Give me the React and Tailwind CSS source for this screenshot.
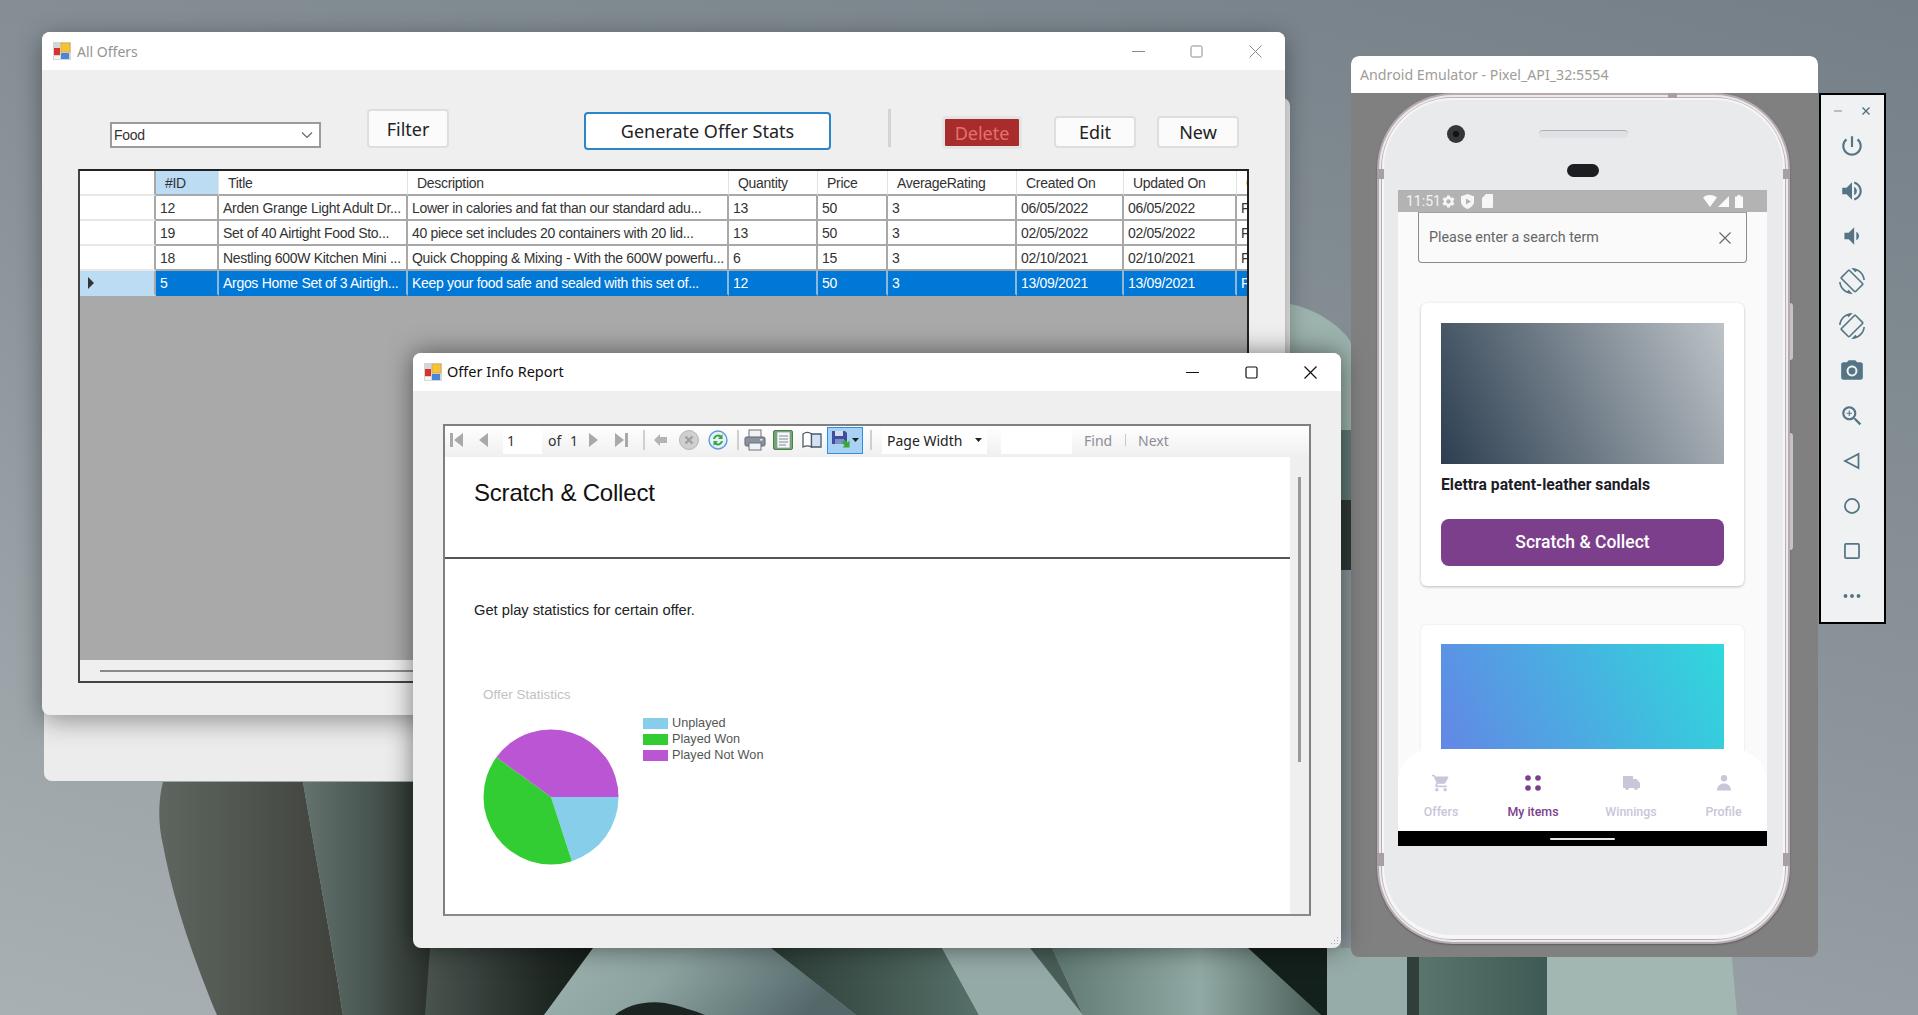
import React from "react";

const columns = [
    {w: "w-[63px]", label: "#ID", active: true},
    {w: "w-[189px]", label: "Title"},
    {w: "w-[321px]", label: "Description"},
    {w: "w-[89px]", label: "Quantity"},
    {w: "w-[70px]", label: "Price"},
    {w: "w-[129px]", label: "AverageRating"},
    {w: "w-[107px]", label: "Created On"},
    {w: "w-[113px]", label: "Updated On"},
    {w: "w-[40px]", label: "C"},
];

const rows = [
    ["12", "Arden Grange Light Adult Dr...", "Lower in calories and fat than our standard adu...", "13", "50", "3", "06/05/2022", "06/05/2022", "F"],
    ["19", "Set of 40 Airtight Food Sto...", "40 piece set includes 20 containers with 20 lid...", "13", "50", "3", "02/05/2022", "02/05/2022", "F"],
    ["18", "Nestling 600W Kitchen Mini ...", "Quick Chopping & Mixing - With the 600W powerfu...", "6", "15", "3", "02/10/2021", "02/10/2021", "F"],
    ["5", "Argos Home Set of 3 Airtigh...", "Keep your food safe and sealed with this set of...", "12", "50", "3", "13/09/2021", "13/09/2021", "F"],
];

function AppIcon() {
    return (
        <svg width="18" height="18" viewBox="0 0 18 18" className="shrink-0">
            <rect width="18" height="18" fill="#d6d6d6"/>
            <rect x="8" y="1" width="9" height="9" fill="#f6c338" stroke="#c79a20" strokeWidth="0.5"/>
            <rect x="1" y="6" width="6" height="7" fill="#d8322a"/>
            <rect x="8" y="11" width="8" height="6" fill="#4a86d8"/>
            <rect x="1" y="14" width="6" height="3" fill="#f4f4f4"/>
        </svg>
    );
}

function WindowControls({color, gapA, gapB, strokeWidth = 1}) {
    return (
        <div className="flex items-center">
            <svg width="13" height="13" viewBox="0 0 13 13"><path d="M0 6.5H13" stroke={color} strokeWidth={strokeWidth}/></svg>
            <svg width="13" height="13" viewBox="0 0 13 13" className={gapA}><rect x="1" y="1" width="11" height="11" rx="1.5" fill="none" stroke={color} strokeWidth={strokeWidth}/></svg>
            <svg width="13" height="13" viewBox="0 0 13 13" className={gapB}><path d="M0.5 0.5L12.5 12.5M12.5 0.5L0.5 12.5" stroke={color} strokeWidth={strokeWidth}/></svg>
        </div>
    );
}

function WinButton({className, children}) {
    return (
        <div className={`flex items-center justify-center rounded border-2 border-[#dedede] bg-[#fbfbfb] font-['Noto_Sans',sans-serif] text-[18px] leading-none text-[#222] ${className}`}>
            {children}
        </div>
    );
}

function OffersGrid() {
    return (
        <div className="ml-[36px] flex h-[514px] w-[1171px] flex-col overflow-hidden border-2 border-b-[#444] border-l-[#444] border-r-[#222] border-t-[#222] bg-[#a9a9a9] font-['Liberation_Sans',sans-serif] text-[14px] tracking-[-0.3px] text-[#333]">
            <div className="flex h-[25px] shrink-0 bg-white">
                <div className="w-[76px] shrink-0 border-b-2 border-r-2 border-b-[#e8e8e8] border-r-[#a8a8a8]"/>
                {columns.map(col => (
                    <div key={col.label}
                         className={`flex shrink-0 items-center border-b-2 border-r border-b-[#a8a8a8] border-r-[#e2e2e2] pl-[9px] pt-[1px] ${col.w} ${col.active ? "bg-[#bcdcf4]" : "bg-white"}`}>
                        {col.label}
                    </div>
                ))}
            </div>
            {rows.map((row, i) => {
                const selected = i === rows.length - 1;
                return (
                    <div key={row[0]} className={`flex h-[25px] shrink-0 ${selected ? "bg-[#0078d7] text-white" : "bg-white"}`}>
                        <div className={`flex w-[76px] shrink-0 items-center border-b-2 border-r-2 border-r-[#a8a8a8] pl-[7px] ${selected ? "border-b-[#bcdcf4] bg-[#bcdcf4]" : "border-b-[#e8e8e8] bg-white"}`}>
                            {selected && (
                                <svg width="8" height="12" viewBox="0 0 8 12"><path d="M1 0L7 6L1 12Z" fill="#333"/></svg>
                            )}
                        </div>
                        {row.map((cell, j) => (
                            <div key={j}
                                 className={`flex shrink-0 items-center overflow-hidden whitespace-nowrap border-b-2 border-r-2 pl-[4px] pt-[1px] ${columns[j].w} ${selected ? "border-b-[#0078d7] border-r-[#8fb8d8]" : "border-b-[#a8a8a8] border-r-[#a8a8a8]"}`}>
                                {cell}
                            </div>
                        ))}
                    </div>
                );
            })}
            <div className="flex-1"/>
            <div className="flex h-[21px] shrink-0 items-center bg-[#efefef] pl-[20px]">
                <div className="h-[2px] w-[600px] bg-[#8a8a8a]"/>
            </div>
        </div>
    );
}

function AllOffersWindow() {
    return (
        <div className="absolute left-[42px] top-[32px] flex h-[683px] w-[1243px] flex-col overflow-hidden rounded-lg bg-[#efefef] shadow-[0_6px_26px_rgba(0,0,0,0.38)]">
            <div className="flex h-[38px] shrink-0 items-center bg-white pl-[11px] pr-[23px]">
                <AppIcon/>
                <span className="ml-[6px] font-['Noto_Sans',sans-serif] text-[14px] text-[#949494]">All Offers</span>
                <div className="ml-auto">
                    <WindowControls color="#8a8a8a" gapA="ml-[45px]" gapB="ml-[46px]"/>
                </div>
            </div>
            <div className="flex h-[99px] shrink-0 items-start pl-[68px]">
                <div className="mt-[52px] flex h-[26px] w-[211px] items-center justify-between border-2 border-[#9b9b9b] bg-white pl-[2px] pr-[6px] font-['Liberation_Sans',sans-serif] text-[14px] tracking-[-0.3px] text-[#333]">
                    Food
                    <svg width="12" height="8" viewBox="0 0 12 8"><path d="M1 1.5L6 6.5L11 1.5" fill="none" stroke="#666" strokeWidth="1.2"/></svg>
                </div>
                <WinButton className="ml-[46px] mt-[39px] h-[39px] w-[82px]">Filter</WinButton>
                <WinButton className="ml-[135px] mt-[42px] h-[38px] w-[247px] !border-[#2a85c9] bg-white">Generate Offer Stats</WinButton>
                <div className="ml-[57px] mt-[39px] h-[38px] w-[3px] bg-[#d4d4d4]"/>
                <div className="ml-[51px] mt-[46px] flex h-[33px] w-[80px] items-center justify-center rounded border-[3px] border-[#e4e4e4] bg-[#a82c2c] font-['Noto_Sans',sans-serif] text-[18px] leading-none text-[#e4726c]">
                    Delete
                </div>
                <WinButton className="ml-[32px] mt-[46px] h-[32px] w-[82px]">Edit</WinButton>
                <WinButton className="ml-[21px] mt-[46px] h-[32px] w-[82px]">New</WinButton>
            </div>
            <OffersGrid/>
        </div>
    );
}

function Tri({dir, bar}) {
    return (
        <svg width="14" height="16" viewBox="0 0 14 16" className="shrink-0">
            {dir === "left"
                ? <path d={bar ? "M13 1V15L4 8Z" : "M11 1V15L2 8Z"} fill="#a9a9a9"/>
                : <path d={bar ? "M1 1V15L10 8Z" : "M3 1V15L12 8Z"} fill="#a9a9a9"/>}
            {bar && <rect x={dir === "left" ? 0 : 11} y="1" width="3" height="14" fill="#a9a9a9"/>}
        </svg>
    );
}

function ToolbarSep({className}) {
    return <div className={`h-[20px] w-[2px] shrink-0 bg-[#cfcfcf] ${className}`}/>;
}

function ReportToolbar() {
    return (
        <div className="flex h-[31px] shrink-0 items-center bg-linear-to-b from-white to-[#efefef] pb-[3px] pl-[5px] font-['Noto_Sans',sans-serif] text-[14px] text-[#333]">
            <Tri dir="left" bar/>
            <div className="ml-[13px]"><Tri dir="left"/></div>
            <div className="ml-[12px] flex h-[28px] w-[39px] shrink-0 items-center bg-white pl-[4px]">1</div>
            <span className="ml-[6px] w-[15px] shrink-0">of</span>
            <span className="ml-[7px] w-[8px] shrink-0">1</span>
            <div className="ml-[8px]"><Tri dir="right"/></div>
            <div className="ml-[14px]"><Tri dir="right" bar/></div>
            <ToolbarSep className="ml-[15px]"/>
            <svg width="14" height="12" viewBox="0 0 14 12" className="ml-[9px] shrink-0"><path d="M0 6L6 0V3H13V9H6V12Z" fill="#b4b4b4"/></svg>
            <svg width="20" height="20" viewBox="0 0 20 20" className="ml-[11px] shrink-0">
                <circle cx="10" cy="10" r="9.5" fill="#cfcfcf" stroke="#b5b5b5"/>
                <path d="M6.5 6.5L13.5 13.5M13.5 6.5L6.5 13.5" stroke="#9f9f9f" strokeWidth="2.4"/>
            </svg>
            <svg width="20" height="20" viewBox="0 0 20 20" className="ml-[9px] shrink-0">
                <circle cx="10" cy="10" r="9" fill="#e6f0fb" stroke="#5d9bd8" strokeWidth="1.4"/>
                <path d="M5 9A5 5 0 0 1 13 5.5L14.5 4V9H10L11.7 7.2A3 3 0 0 0 7 9Z" fill="#3aa63a"/>
                <path d="M15 11A5 5 0 0 1 7 14.5L5.5 16V11H10L8.3 12.8A3 3 0 0 0 13 11Z" fill="#3aa63a"/>
            </svg>
            <ToolbarSep className="ml-[9px]"/>
            <svg width="22" height="22" viewBox="0 0 22 22" className="ml-[5px] shrink-0">
                <rect x="5" y="1" width="12" height="8" fill="#f2f2f2" stroke="#6c7480"/>
                <rect x="1" y="8" width="20" height="9" rx="1.5" fill="#8a929c" stroke="#5e6670"/>
                <rect x="5" y="14" width="12" height="7" fill="#eef3f8" stroke="#6c7480"/>
                <rect x="16" y="10" width="2.5" height="1.5" fill="#e4e8ec"/>
            </svg>
            <svg width="20" height="20" viewBox="0 0 20 20" className="ml-[7px] shrink-0">
                <rect x="0.5" y="0.5" width="19" height="19" rx="1.5" fill="#6ea86e" stroke="#4c7f4c"/>
                <rect x="4" y="2" width="13" height="16" fill="#f4f6f8" stroke="#8d98a4" strokeWidth="0.7"/>
                <path d="M6 6H15M6 9H15M6 12H15M6 15H13" stroke="#7f8a96"/>
            </svg>
            <svg width="20" height="18" viewBox="0 0 20 18" className="ml-[9px] shrink-0">
                <path d="M1 3C4 1 7 1 9.5 3V16C7 14.5 4 14.5 1 16Z" fill="#fff" stroke="#4f5966" strokeWidth="1.3"/>
                <path d="M9.5 3H19V16H9.5Z" fill="#d3e2f5" stroke="#4f5966" strokeWidth="1.3"/>
            </svg>
            <div className="ml-[5px] flex h-[27px] w-[36px] shrink-0 items-center justify-center gap-[1px] border border-[#2d8fe0] bg-[#a9d1f3]">
                <svg width="20" height="20" viewBox="0 0 20 20">
                    <path d="M1 1H14L16 3V14H1Z" fill="#3b4f9e"/>
                    <rect x="4" y="1" width="8" height="5" fill="#d6dcf0"/>
                    <rect x="4" y="9" width="9" height="5" fill="#7f8fc8"/>
                    <path d="M11 12H15V9L20 14L15 19V16H11Z" fill="#38a838" transform="rotate(45 15 14)"/>
                </svg>
                <svg width="7" height="4" viewBox="0 0 7 4"><path d="M0 0H7L3.5 4Z" fill="#222"/></svg>
            </div>
            <ToolbarSep className="ml-[7px]"/>
            <div className="ml-[10px] flex h-[28px] w-[105px] shrink-0 items-center justify-between bg-white pl-[5px] pr-[5px] text-[#222]">
                Page Width
                <svg width="7" height="4" viewBox="0 0 7 4"><path d="M0 0H7L3.5 4Z" fill="#222"/></svg>
            </div>
            <div className="ml-[14px] h-[28px] w-[71px] shrink-0 bg-white"/>
            <span className="ml-[12px] w-[28px] shrink-0 text-[#8d8d9a]">Find</span>
            <div className="ml-[13px] h-[12px] w-[1px] shrink-0 bg-[#c8c8c8]"/>
            <span className="ml-[12px] text-[#8d8d9a]">Next</span>
        </div>
    );
}

function OfferPie() {
    return (
        <svg width="136" height="136" viewBox="0 0 136 136" className="mt-[12px] shrink-0">
            <path d="M68 68L135.5 68A67.5 67.5 0 0 1 88.86 132.2Z" fill="#87ceeb"/>
            <path d="M68 68L88.86 132.2A67.5 67.5 0 0 1 13.4 28.3Z" fill="#32cd32"/>
            <path d="M68 68L13.4 28.3A67.5 67.5 0 0 1 135.5 68Z" fill="#ba55d3"/>
        </svg>
    );
}

const legend = [
    {name: "Unplayed", color: "bg-[#87ceeb]"},
    {name: "Played Won", color: "bg-[#32cd32]"},
    {name: "Played Not Won", color: "bg-[#ba55d3]"},
];

function ReportWindow() {
    return (
        <div className="absolute left-[413px] top-[353px] flex h-[595px] w-[928px] flex-col overflow-hidden rounded-lg bg-[#efefef] shadow-[0_0_26px_rgba(0,0,0,0.5)]">
            <div className="flex h-[38px] shrink-0 items-center bg-white pl-[11px] pr-[24px]">
                <AppIcon/>
                <span className="ml-[5px] font-['Noto_Sans',sans-serif] text-[14.5px] text-[#111]">Offer Info Report</span>
                <div className="ml-auto">
                    <WindowControls color="#111" gapA="ml-[46px]" gapB="ml-[46px]" strokeWidth={1.2}/>
                </div>
            </div>
            <div className="ml-[30px] mt-[33px] flex h-[492px] w-[868px] flex-col border-2 border-[#808080] border-b-[#8a8a8a]">
                <ReportToolbar/>
                <div className="flex min-h-0 flex-1">
                    <div className="w-[845px] bg-white font-['Liberation_Sans',sans-serif]">
                        <div className="h-[102px] border-b-2 border-[#555] pl-[29px] pt-[22px] text-[24px] leading-[28px] tracking-[-0.2px] text-[#111]">
                            Scratch &amp; Collect
                        </div>
                        <p className="ml-[29px] mt-[42px] text-[14.7px] leading-[18px] text-[#222]">Get play statistics for certain offer.</p>
                        <p className="ml-[38px] mt-[68px] text-[13.5px] leading-[16px] text-[#c2c2c2]">Offer Statistics</p>
                        <div className="ml-[38px] mt-[14px] flex items-start">
                            <OfferPie/>
                            <div className="-mt-[1px] ml-[24px] text-[12.7px] leading-[15.75px] text-[#555]">
                                {legend.map(item => (
                                    <div key={item.name} className="flex items-center">
                                        <div className={`h-[11px] w-[25px] ${item.color}`}/>
                                        <span className="ml-[4px]">{item.name}</span>
                                    </div>
                                ))}
                            </div>
                        </div>
                    </div>
                    <div className="flex-1 bg-[#efefef] pl-[8px] pt-[20px]">
                        <div className="h-[285px] w-[3px] bg-[#9a9a9a]"/>
                    </div>
                </div>
            </div>
            <svg width="10" height="10" viewBox="0 0 10 10" className="absolute bottom-[2px] right-[2px]">
                <path d="M8 1h1v1H8zM8 4h1v1H8zM5 4h1v1H5zM8 7h1v1H8zM5 7h1v1H5zM2 7h1v1H2z" fill="#a8a8a8"/>
            </svg>
        </div>
    );
}

const rotatePath = "M16.48 2.52c3.27 1.55 5.61 4.72 5.97 8.48h1.5C23.44 4.84 18.29 0 12 0l-.66.03 3.81 3.81 1.33-1.32zm-6.25-.77c-.59-.59-1.54-.59-2.12 0L1.75 8.11c-.59.59-.59 1.54 0 2.12l12.02 12.02c.59.59 1.54.59 2.12 0l6.36-6.36c.59-.59.59-1.54 0-2.12L10.23 1.75zm4.6 19.44L2.81 9.17l6.36-6.36 12.02 12.02-6.36 6.36zm-7.31.29C4.25 19.94 1.91 16.76 1.55 13H.05C.56 19.16 5.71 24 12 24l.66-.03-3.81-3.81-1.33 1.32z";

const ink = "#557585";

const emuIcons = [
    <path key="power" d="M13 3h-2v10h2V3zm4.83 2.17l-1.42 1.42C17.99 7.86 19 9.81 19 12c0 3.87-3.13 7-7 7s-7-3.13-7-7c0-2.19 1.01-4.14 2.58-5.42L6.17 5.17C4.23 6.82 3 9.26 3 12c0 4.97 4.03 9 9 9s9-4.03 9-9c0-2.74-1.23-5.18-3.17-6.83z" fill={ink}/>,
    <path key="up" d="M3 9v6h4l5 5V4L7 9H3zm13.5 3c0-1.77-1.02-3.29-2.5-4.03v8.05c1.48-.73 2.5-2.25 2.5-4.02zM14 3.23v2.06c2.89.86 5 3.54 5 6.71s-2.11 5.85-5 6.71v2.06c4.01-.91 7-4.49 7-8.77s-2.99-7.86-7-8.77z" fill={ink}/>,
    <path key="down" d="M18.5 12c0-1.77-1.02-3.29-2.5-4.03v8.05c1.48-.73 2.5-2.25 2.5-4.02zM5 9v6h4l5 5V4L9 9H5z" fill={ink}/>,
    <path key="rot" d={rotatePath} fill={ink}/>,
    <path key="rotl" d={rotatePath} fill={ink} transform="matrix(-1 0 0 1 24 0)"/>,
    <g key="cam" fill={ink}>
        <path d="M9 2L7.17 4H4c-1.1 0-2 .9-2 2v12c0 1.1.9 2 2 2h16c1.1 0 2-.9 2-2V6c0-1.1-.9-2-2-2h-3.17L15 2H9zm3 15c-2.76 0-5-2.24-5-5s2.24-5 5-5 5 2.24 5 5-2.24 5-5 5z"/>
        <circle cx="12" cy="12" r="3.2"/>
    </g>,
    <path key="zoom" d="M15.5 14h-.79l-.28-.27C15.41 12.59 16 11.11 16 9.5 16 5.91 13.09 3 9.5 3S3 5.91 3 9.5 5.91 16 9.5 16c1.61 0 3.09-.59 4.23-1.57l.27.28v.79l5 4.99L20.49 19l-4.99-5zm-6 0C7.01 14 5 11.99 5 9.5S7.01 5 9.5 5 14 7.01 14 9.5 11.99 14 9.5 14zM12 10h-2v2H9v-2H7V9h2V7h1v2h2v1z" fill={ink}/>,
    <path key="back" d="M18 5.5V18.5L5.5 12Z" fill="none" stroke={ink} strokeWidth="1.6"/>,
    <circle key="home" cx="12" cy="12" r="6.5" fill="none" stroke={ink} strokeWidth="1.6"/>,
    <rect key="square" x="5.5" y="5.5" width="13" height="13" rx="1" fill="none" stroke={ink} strokeWidth="1.6"/>,
    <g key="dots" fill={ink}><circle cx="6" cy="12" r="1.8"/><circle cx="12" cy="12" r="1.8"/><circle cx="18" cy="12" r="1.8"/></g>,
];

function EmulatorToolbar() {
    return (
        <div className="absolute left-[1819px] top-[93px] flex h-[531px] w-[67px] flex-col border-2 border-black bg-[#f0f1f2] pr-[2px]">
            <div className="flex h-[28px] shrink-0 items-center justify-center gap-[20px] pt-[4px]">
                <svg width="8" height="8" viewBox="0 0 8 8"><path d="M0 4H8" stroke="#8aa0ac" strokeWidth="1.2"/></svg>
                <svg width="8" height="8" viewBox="0 0 8 8"><path d="M0.5 0.5L7.5 7.5M7.5 0.5L0.5 7.5" stroke="#4e7080" strokeWidth="1.4"/></svg>
            </div>
            {emuIcons.map((icon, i) => (
                <div key={i} className="flex h-[45.1px] shrink-0 items-center justify-center">
                    <svg width="26" height="26" viewBox="0 0 24 24">{icon}</svg>
                </div>
            ))}
        </div>
    );
}

function StatusBar() {
    return (
        <div className="flex h-[22px] shrink-0 items-center bg-[#b3b3b3] pl-[8px] pr-[24px] font-['Roboto',sans-serif] text-[14px] text-[#f4f4f4]">
            <span className="w-[35px] shrink-0">11:51</span>
            <svg width="15" height="15" viewBox="0 0 24 24" className="shrink-0">
                <path d="M19.14 12.94c.04-.3.06-.61.06-.94 0-.32-.02-.64-.07-.94l2.03-1.58c.18-.14.23-.41.12-.61l-1.92-3.32c-.12-.22-.37-.29-.59-.22l-2.39.96c-.5-.38-1.03-.7-1.62-.94l-.36-2.54c-.04-.24-.24-.41-.48-.41h-3.84c-.24 0-.43.17-.47.41l-.36 2.54c-.59.24-1.13.57-1.62.94l-2.39-.96c-.22-.08-.47 0-.59.22L2.74 8.87c-.12.21-.08.47.12.61l2.03 1.58c-.05.3-.09.63-.09.94s.02.64.07.94l-2.03 1.58c-.18.14-.23.41-.12.61l1.92 3.32c.12.22.37.29.59.22l2.39-.96c.5.38 1.03.7 1.62.94l.36 2.54c.05.24.24.41.48.41h3.84c.24 0 .44-.17.47-.41l.36-2.54c.59-.24 1.13-.56 1.62-.94l2.39.96c.22.08.47 0 .59-.22l1.92-3.32c.12-.22.07-.47-.12-.61l-2.01-1.58zM12 15.6c-1.98 0-3.6-1.62-3.6-3.6s1.62-3.6 3.6-3.6 3.6 1.62 3.6 3.6-1.62 3.6-3.6 3.6z" fill="#f6f6f6"/>
            </svg>
            <svg width="13" height="15" viewBox="0 0 13 15" className="ml-[5px] shrink-0">
                <path d="M6.5 0L13 2.3V7.5C13 11 10 13.7 6.5 15 3 13.7 0 11 0 7.5V2.3Z" fill="#f6f6f6"/>
                <path d="M5 4.5V10.5L10 7.5Z" fill="#b3b3b3"/>
            </svg>
            <svg width="11" height="14" viewBox="0 0 11 14" className="ml-[8px] shrink-0">
                <path d="M4 0H10A1 1 0 0 1 11 1V13A1 1 0 0 1 10 14H1A1 1 0 0 1 0 13V4Z" fill="#f6f6f6"/>
            </svg>
            <div className="ml-auto flex items-center">
                <svg width="14" height="12" viewBox="0 0 14 12"><path d="M0 2.5C4-.8 10-.8 14 2.5L7 12Z" fill="#fafafa"/></svg>
                <svg width="11" height="11" viewBox="0 0 11 11" className="ml-[1px]"><path d="M11 0V11H0Z" fill="#fafafa"/></svg>
                <svg width="8" height="13" viewBox="0 0 8 13" className="ml-[6px]"><path d="M2.5 0H5.5V1.5H8V13H0V1.5H2.5Z" fill="#fafafa"/></svg>
            </div>
        </div>
    );
}

function NavItem({label, width, active, children}) {
    return (
        <div className={`flex shrink-0 flex-col items-center ${width}`}>
            <div className="flex h-[20px] items-center justify-center">{children}</div>
            <span className={`mt-[11px] text-[12.4px] font-medium leading-[16px] ${active ? "text-[#7b3f8c]" : "text-[#c9c6d9]"}`}>{label}</span>
        </div>
    );
}

function BottomNav() {
    const muted = "#c9c6d9";
    return (
        <div className="absolute bottom-[15px] left-0 flex h-[82px] w-full rounded-t-[34px] bg-white pt-[24px] font-['Roboto',sans-serif]">
            <NavItem label="Offers" width="w-[86px]">
                <svg width="20" height="20" viewBox="0 0 24 24"><path d="M7 18c-1.1 0-1.99.9-1.99 2S5.9 22 7 22s2-.9 2-2-.9-2-2-2zM1 2v2h2l3.6 7.59-1.35 2.45c-.16.28-.25.61-.25.96 0 1.1.9 2 2 2h12v-2H7.42c-.14 0-.25-.11-.25-.25l.03-.12.9-1.63h7.45c.75 0 1.41-.41 1.75-1.03l3.58-6.47c.08-.13.12-.29.12-.45 0-.55-.45-1-1-1H5.21l-.94-2H1zM17 18c-1.1 0-1.99.9-1.99 2s.89 2 1.99 2 2-.9 2-2-.9-2-2-2z" fill={muted}/></svg>
            </NavItem>
            <NavItem label="My items" width="w-[98px]" active>
                <svg width="16" height="16" viewBox="0 0 16 16" fill="#7b3f8c">
                    <circle cx="3" cy="3" r="2.8"/><circle cx="13" cy="3" r="2.8"/><circle cx="3" cy="13" r="2.8"/><circle cx="13" cy="13" r="2.8"/>
                </svg>
            </NavItem>
            <NavItem label="Winnings" width="w-[98px]">
                <svg width="18" height="14" viewBox="0 0 18 14"><path d="M1 0H11V3H14.5L18 7V12H16A2 2 0 0 1 12 12H7A2 2 0 0 1 3 12H1Z" fill={muted}/></svg>
            </NavItem>
            <NavItem label="Profile" width="w-[87px]">
                <svg width="14" height="16" viewBox="0 0 14 16"><circle cx="7" cy="3.2" r="3.2" fill={muted}/><path d="M0 15.5C0 11 3.5 8.5 7 8.5S14 11 14 15.5Z" fill={muted}/></svg>
            </NavItem>
        </div>
    );
}

function PhoneScreen() {
    return (
        <div className="relative ml-[14px] mt-[89px] flex h-[656px] w-[369px] flex-col overflow-hidden bg-[#fafafa]">
            <StatusBar/>
            <div className="mx-[20px] flex h-[51px] shrink-0 items-start justify-between rounded-b border border-[#8c8c8c] border-t-[#a0a0a0] pl-[10px] pr-[15px] pt-[15px] font-['Roboto',sans-serif] text-[14.3px] leading-[18px] text-[#666]">
                Please enter a search term
                <svg width="12" height="12" viewBox="0 0 12 12" className="mt-[4px]"><path d="M0.5 0.5L11.5 11.5M11.5 0.5L0.5 11.5" stroke="#666" strokeWidth="1.1"/></svg>
            </div>
            <div className="ml-[23px] mt-[40px] h-[283px] w-[323px] shrink-0 rounded-md bg-white p-[20px] shadow-[0_1px_3px_rgba(0,0,0,0.25)]">
                <div className="h-[141px] bg-[linear-gradient(65deg,#2c3e50,#bdc3c7)]"/>
                <p className="mt-[12px] font-['Roboto',sans-serif] text-[15.7px] font-bold leading-[18px] text-[#1c1c26]">Elettra patent-leather sandals</p>
                <div className="mt-[25px] flex h-[47px] items-center justify-center rounded-lg bg-[#7b3f8c] font-['Roboto',sans-serif] text-[17.5px] font-medium text-white">Scratch &amp; Collect</div>
            </div>
            <div className="ml-[23px] mt-[39px] h-[283px] w-[323px] shrink-0 rounded-md bg-white p-[19px] shadow-[0_0_2px_rgba(0,0,0,0.12)]">
                <div className="ml-[1px] h-[141px] w-[283px] bg-[linear-gradient(65deg,#6583e6,#2fd8dc)]"/>
            </div>
            <BottomNav/>
            <div className="absolute bottom-0 left-0 flex h-[15px] w-full items-center justify-center bg-black">
                <div className="h-[2px] w-[65px] rounded-full bg-[#e8e8e8]"/>
            </div>
        </div>
    );
}

function Phone() {
    return (
        <div className="relative ml-[26px] h-[851px] w-[413px] rounded-[76px] bg-[#b5abb0] p-[2px] shadow-[0_1px_2px_rgba(0,0,0,0.3)]">
            <div className="h-full rounded-[74px] bg-[#ece9ea] p-[2px]">
                <div className="h-full rounded-[72px] bg-[#b9b0b5] p-[1px]">
                    <div className="relative h-full rounded-[70px] bg-[#f6f6f8] p-[3px]">
                        <div className="-m-[1px] h-full rounded-[68px] bg-[#e9eaec] pt-[1px]">
                            <PhoneScreen/>
                        </div>
                        <div className="absolute left-[65px] top-[27px] flex h-[18px] w-[18px] items-center justify-center rounded-full bg-[#33363a]">
                            <div className="h-[6px] w-[6px] rounded-full bg-[#11130f]"/>
                        </div>
                        <div className="absolute left-[157px] top-[32px] h-[8px] w-[89px] rounded-full border-t border-[#aab0b8] bg-[#dfe1e4]"/>
                        <div className="absolute left-[185px] top-[66px] h-[13px] w-[32px] rounded-full bg-[#1d1e22]"/>
                    </div>
                </div>
            </div>
            {/* frame seams and side buttons */}
            <div className="absolute left-[291px] top-0 h-[5px] w-[9px] bg-[#a89fa4]"/>
            <div className="absolute left-0 top-[76px] h-[10px] w-[7px] bg-[#a89fa4]"/>
            <div className="absolute right-0 top-[76px] h-[10px] w-[7px] bg-[#a89fa4]"/>
            <div className="absolute left-0 bottom-[78px] h-[13px] w-[7px] bg-[#a89fa4]"/>
            <div className="absolute right-0 bottom-[78px] h-[13px] w-[7px] bg-[#a89fa4]"/>
            <div className="absolute -right-[3px] top-[210px] h-[57px] w-[3px] rounded-r bg-[#c8c2c5]"/>
            <div className="absolute -right-[3px] top-[340px] h-[117px] w-[3px] rounded-r bg-[#c8c2c5]"/>
        </div>
    );
}

function EmulatorWindow() {
    return (
        <div className="absolute left-[1351px] top-[56px] flex h-[901px] w-[467px] flex-col overflow-hidden rounded-lg bg-[#808080]">
            <div className="flex h-[37px] shrink-0 items-center rounded-t-lg bg-white pl-[9px] font-['Noto_Sans',sans-serif] text-[14.2px] text-[#a09c98]">
                Android Emulator - Pixel_API_32:5554
            </div>
            <Phone/>
        </div>
    );
}

function Wallpaper() {
    return (
        <svg className="absolute inset-0" width="1918" height="1015" viewBox="0 0 1918 1015">
            <defs>
                <linearGradient id="darkPetal" x1="0" x2="1" y1="0" y2="0">
                    <stop offset="0" stopColor="#5e6660"/>
                    <stop offset="1" stopColor="#3f413b"/>
                </linearGradient>
                <linearGradient id="darkerPetal" x1="0" x2="1" y1="0" y2="0">
                    <stop offset="0" stopColor="#64736e"/>
                    <stop offset="0.5" stopColor="#47544f"/>
                    <stop offset="1" stopColor="#262b25"/>
                </linearGradient>
                <linearGradient id="blackPetal" x1="0" x2="1" y1="0" y2="0">
                    <stop offset="0" stopColor="#4a544f"/>
                    <stop offset="0.7" stopColor="#1f2723"/>
                    <stop offset="1" stopColor="#141c18"/>
                </linearGradient>
                <linearGradient id="palePetal" x1="0" x2="1" y1="0" y2="0.2">
                    <stop offset="0" stopColor="#9db3af"/>
                    <stop offset="0.45" stopColor="#8ca3a0"/>
                    <stop offset="1" stopColor="#54686a"/>
                </linearGradient>
                <linearGradient id="shadePetal" x1="0" x2="1" y1="0" y2="0">
                    <stop offset="0" stopColor="#2c3c36"/>
                    <stop offset="1" stopColor="#567069"/>
                </linearGradient>
                <linearGradient id="midPetal" x1="0" x2="1" y1="0" y2="0">
                    <stop offset="0" stopColor="#5f7871"/>
                    <stop offset="0.55" stopColor="#91a9a4"/>
                    <stop offset="1" stopColor="#4a5e58"/>
                </linearGradient>
                <linearGradient id="rightPetal" x1="0" x2="1" y1="0" y2="0">
                    <stop offset="0" stopColor="#5a756e"/>
                    <stop offset="1" stopColor="#3f5a54"/>
                </linearGradient>
            </defs>
            <path d="M1290 304C1320 310 1345 330 1351 343V430H1290Z" fill="#9db3ae"/>
            <path d="M1341 430H1351V500H1341Z" fill="#5f7a75"/>
            <path d="M1341 500H1351V570H1341Z" fill="#2f3a36"/>
            <path d="M1341 570H1351V960H1341Z" fill="#8a9499"/>
            <path d="M163 782C158 800 158 825 163 845C170 880 180 925 217 1015H343C335 960 325 910 303 782Z" fill="url(#darkPetal)"/>
            <path d="M303 782H430V948L440 1015H343C335 960 325 910 303 782Z" fill="url(#darkerPetal)"/>
            <path d="M430 948H600L544 1015H425Z" fill="url(#blackPetal)"/>
            <path d="M593 948H771L856 1015H544Z" fill="url(#palePetal)"/>
            <path d="M615 1015C625 1006 645 1000 665 1003C680 1006 695 1011 705 1015Z" fill="#1a2420"/>
            <path d="M771 948H942L979 1015H856Z" fill="url(#shadePetal)"/>
            <path d="M942 948H1030L1083 1015H979Z" fill="#94aaa6"/>
            <path d="M1030 948H1052L1083 1015Z" fill="#4a5e58"/>
            <path d="M1052 948H1248L1321 1015H1083Z" fill="url(#midPetal)"/>
            <path d="M1248 948H1327V1015H1321Z" fill="#14201c"/>
            <path d="M1327 948H1407V1015H1327Z" fill="#96aca8"/>
            <path d="M1407 948H1419V1015H1407Z" fill="#2f403a"/>
            <path d="M1419 948H1547V1015H1419Z" fill="url(#rightPetal)"/>
            <path d="M1547 948H1731L1737 1015H1547Z" fill="#a2b6b2"/>
        </svg>
    );
}

export default function App() {
    return (
        <div className="relative h-[1015px] w-[1918px] overflow-hidden bg-[linear-gradient(195deg,#757f87,#8c959b_50%,#a8b0b3)]">
            <Wallpaper/>
            <div className="absolute left-[44px] top-[98px] h-[683px] w-[1246px] rounded-lg bg-[#ececec]"/>
            <AllOffersWindow/>
            <EmulatorWindow/>
            <EmulatorToolbar/>
            <ReportWindow/>
        </div>
    );
}
